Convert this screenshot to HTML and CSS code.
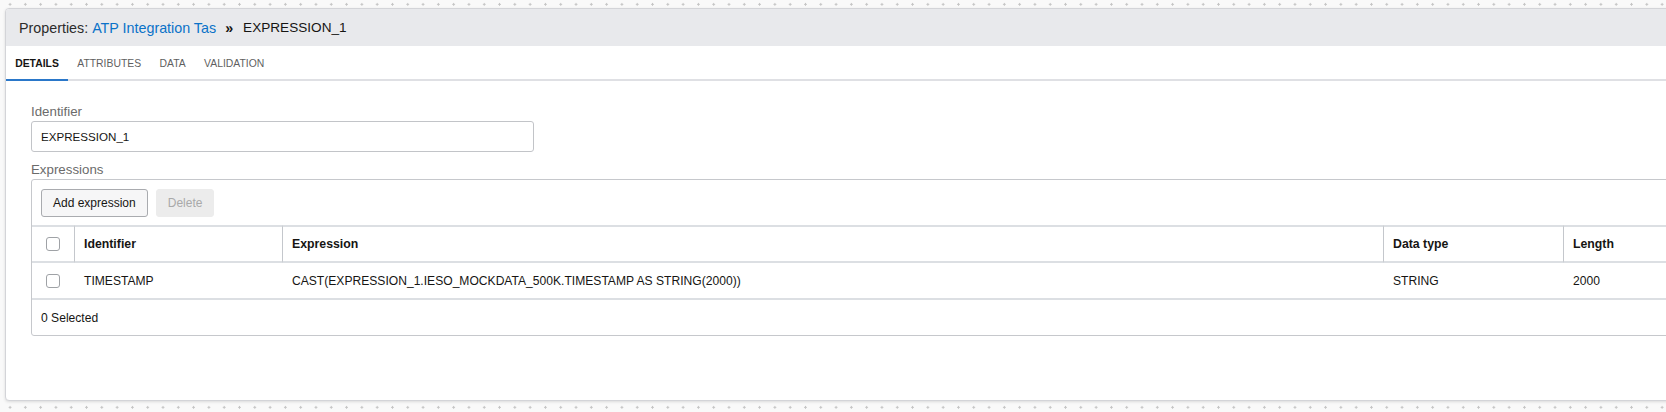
FILE: index.html
```html
<!DOCTYPE html>
<html lang="en">
<head>
<meta charset="utf-8">
<title>Properties</title>
<link rel="stylesheet" href="styles.css">
</head>
<body>
<div class="panel">
  <div class="panel-header">
    <span class="title-label">Properties:</span>
    <a class="title-link" href="#">ATP Integration Tas</a>
    <span class="title-sep">»</span>
    <span class="title-current">EXPRESSION_1</span>
  </div>
  <div class="tabs">
    <div class="tab active">DETAILS</div>
    <div class="tab">ATTRIBUTES</div>
    <div class="tab">DATA</div>
    <div class="tab">VALIDATION</div>
  </div>
  <div class="content">
    <div class="field">
      <div class="field-label">Identifier</div>
      <input class="text-input" type="text" value="EXPRESSION_1">
    </div>
    <div class="field">
      <div class="field-label">Expressions</div>
      <div class="grid-box">
        <div class="toolbar">
          <button class="btn">Add expression</button>
          <button class="btn disabled">Delete</button>
        </div>
        <table class="grid">
          <thead>
            <tr>
              <th class="c-check"><span class="checkbox"></span></th>
              <th class="c-id">Identifier</th>
              <th class="c-expr">Expression</th>
              <th class="c-type">Data type</th>
              <th class="c-len">Length</th>
            </tr>
          </thead>
          <tbody>
            <tr>
              <td class="c-check"><span class="checkbox"></span></td>
              <td>TIMESTAMP</td>
              <td>CAST(EXPRESSION_1.IESO_MOCKDATA_500K.TIMESTAMP AS STRING(2000))</td>
              <td>STRING</td>
              <td>2000</td>
            </tr>
          </tbody>
        </table>
        <div class="grid-footer">0 Selected</div>
      </div>
    </div>
  </div>
</div>
</body>
</html>
```
FILE: styles.css
```css
html, body {
  margin: 0;
  padding: 0;
}
body {
  background: #f9f9f9;
  font-family: "Liberation Sans", Arial, sans-serif;
  color: #161513;
  overflow: hidden;
  width: 1666px;
  height: 412px;
  position: relative;
}
body::before,
body::after {
  content: "";
  position: absolute;
  inset: 0;
  z-index: 0;
}
body::before {
  background-image: linear-gradient(to right, transparent 9.5px, #c4c4c4 9.5px, #c4c4c4 10.5px, transparent 10.5px);
  background-size: 15.3px 100%;
  -webkit-mask-image: linear-gradient(to bottom, transparent 2.5px, #000 2.5px, #000 5.5px, transparent 5.5px);
  -webkit-mask-size: 100% 15.5px;
  mask-image: linear-gradient(to bottom, transparent 2.5px, #000 2.5px, #000 5.5px, transparent 5.5px);
  mask-size: 100% 15.5px;
}
body::after {
  background-image: linear-gradient(to bottom, transparent 3.5px, #c4c4c4 3.5px, #c4c4c4 4.5px, transparent 4.5px);
  background-size: 100% 15.5px;
  -webkit-mask-image: linear-gradient(to right, transparent 8.5px, #000 8.5px, #000 11.5px, transparent 11.5px);
  -webkit-mask-size: 15.3px 100%;
  mask-image: linear-gradient(to right, transparent 8.5px, #000 8.5px, #000 11.5px, transparent 11.5px);
  mask-size: 15.3px 100%;
}

.panel {
  position: relative;
  z-index: 1;
  margin: 8px 0 0 5px;
  width: 1720px;
  height: 393px;
  box-sizing: border-box;
  background: #fff;
  border: 1px solid #d3d4d8;
  border-radius: 4px;
  box-shadow: 0 1px 3px rgba(0, 0, 0, 0.12);
  overflow: hidden;
}

.panel-header {
  height: 37px;
  background: #e8e9ec;
  display: flex;
  align-items: center;
  padding-left: 13px;
  font-size: 14.3px;
  color: #2b2b2b;
}
.title-link {
  color: #0a72c8;
  text-decoration: none;
  margin-left: 4px;
}
.title-sep {
  font-weight: bold;
  margin: 0 10px 0 9px;
  color: #161513;
}
.title-current {
  font-size: 13.6px;
  color: #161513;
}

.tabs {
  display: flex;
  height: 33px;
  border-bottom: 2px solid #dfe0e4;
}
.tab {
  box-sizing: border-box;
  height: 35px;
  padding: 1px 9.2px 0;
  display: flex;
  align-items: center;
  font-size: 10.4px;
  color: #5f5f5f;
  margin-bottom: -2px;
  border-bottom: 2px solid transparent;
}
.tab.active {
  color: #161513;
  font-weight: bold;
  border-bottom-color: #2a77c9;
}

.content {
  padding: 23px 0 0 25px;
}
.field-label {
  font-size: 13.3px;
  line-height: 16px;
  color: #6b6b6b;
  margin-bottom: 1px;
}
.field + .field {
  margin-top: 10px;
}
.text-input {
  display: block;
  box-sizing: border-box;
  width: 503px;
  height: 31px;
  margin: 0;
  border: 1px solid #c2c4c8;
  border-radius: 3px;
  padding: 0 9px;
  font-family: "Liberation Sans", Arial, sans-serif;
  font-size: 11.6px;
  color: #161513;
  background: #fff;
  outline: none;
}

.grid-box {
  width: 1660px;
  border: 1px solid #c6c8cc;
  border-radius: 3px;
  background: #fff;
}
.toolbar {
  height: 45px;
  display: flex;
  align-items: center;
  gap: 8px;
  padding-left: 9px;
}
.btn {
  height: 28px;
  box-sizing: border-box;
  padding: 0 11px;
  border: 1px solid #a9abaf;
  border-radius: 3px;
  background: #f6f6f7;
  font-family: "Liberation Sans", Arial, sans-serif;
  font-size: 12px;
  color: #161513;
}
.btn.disabled {
  border-color: #ececec;
  background: #ececec;
  color: #a9a9a9;
}

.grid {
  border-collapse: separate;
  border-spacing: 0;
  table-layout: fixed;
  width: 1660px;
  font-size: 12.1px;
}
.grid th,
.grid td {
  box-sizing: border-box;
  text-align: left;
  padding: 0 9px;
  white-space: nowrap;
}
.grid th {
  height: 38px;
  font-size: 12.3px;
  font-weight: bold;
  color: #161513;
  border-top: 2px solid #dcdfe3;
  border-bottom: 2px solid #dcdfe3;
}
.grid th + th {
  border-left: 1px solid #c4c7cc;
}
.grid td {
  height: 37px;
  color: #161513;
  border-bottom: 2px solid #dcdfe3;
}
.grid td + td {
  padding-left: 10px;
}
.grid .c-check {
  width: 42px;
  padding: 0;
  text-align: center;
}
.grid .c-id { width: 208px; }
.grid .c-expr { width: 1101px; }
.grid .c-type { width: 180px; }
.grid .c-len { width: 129px; }

.checkbox {
  display: inline-block;
  width: 14px;
  height: 14px;
  box-sizing: border-box;
  border: 1px solid #9fa2a6;
  border-radius: 3px;
  background: #fff;
  vertical-align: middle;
}

.grid-footer {
  height: 35px;
  display: flex;
  align-items: center;
  padding-left: 9px;
  font-size: 12.1px;
  color: #161513;
}
```
